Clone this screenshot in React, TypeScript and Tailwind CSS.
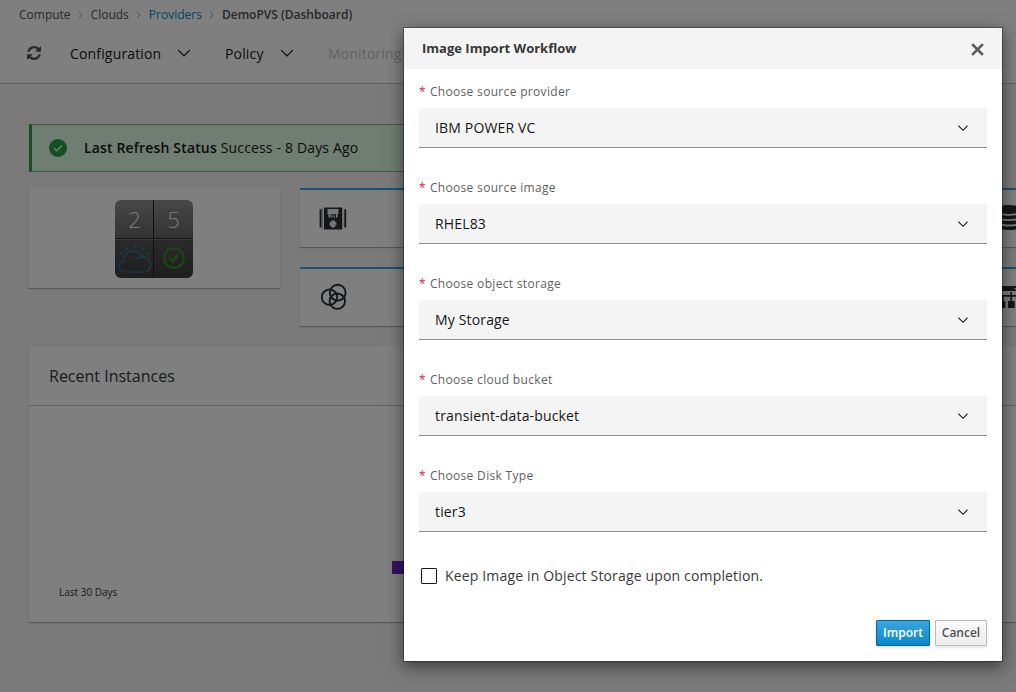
import React from "react";

const fields = [
  { label: "Choose source provider", value: "IBM POWER VC" },
  { label: "Choose source image", value: "RHEL83" },
  { label: "Choose object storage", value: "My Storage" },
  { label: "Choose cloud bucket", value: "transient-data-bucket" },
  { label: "Choose Disk Type", value: "tier3" },
];

function Chevron({ size = 16 }: { size?: number }) {
  return (
    <svg width={size} height={size} viewBox="0 0 16 16" fill="currentColor" className="shrink-0">
      <path d="M8 11L3 6l.7-.7L8 9.6l4.3-4.3.7.7z" />
    </svg>
  );
}

function Crumb() {
  return (
    <svg width="5" height="8" viewBox="0 0 5 8" fill="none" stroke="#9c9c9c" strokeWidth="1" className="mx-[7.5px] shrink-0">
      <path d="M1 1l3 3-3 3" />
    </svg>
  );
}

function RefreshIcon() {
  return (
    <svg width="14" height="14" viewBox="0 0 1536 1536" fill="#4d5258">
      <path d="M1511 928q0 5-1 7-64 268-268 434.500T764 1536q-146 0-282.500-55T238 1324l-129 129q-19 19-45 19t-45-19-19-45V960q0-26 19-45t45-19h448q26 0 45 19t19 45-19 45l-137 137q71 66 161 102t187 36q134 0 250-65t186-179q11-17 53-117 8-23 30-23h192q13 0 22.500 9.500t9.500 22.500zm25-800v448q0 26-19 45t-45 19h-448q-26 0-45-19t-19-45 19-45l138-138Q969 256 768 256q-134 0-250 65T332 500q-11 17-53 117-8 23-30 23H50q-13 0-22.500-9.500T18 608v-7q65-268 270-434.500T768 0q146 0 284 55.500T1297 212l130-129q19-19 45-19t45 19 19 45z" />
    </svg>
  );
}

function VmIcon() {
  return (
    <svg width="28" height="24" viewBox="0 0 28 24" fill="#292e34" className="mt-px">
      <path d="M.6 2.200h1.900v18.300H.6zM25.300 2.200h1.900v18.300h-1.900z" />
      <path d="M3 1h1v21H3z" opacity=".35" />
      <path d="M23.400 1h.8v21h-.8z" opacity=".35" />
      <path d="M5 .5h18v22H5z" />
      <path d="M8.500 2h11v5.300h-11zM9.500 7.300h2v3.200h-2zM12.200 8.300h1.400v2.200h-1.400zM14.600 8.300H16v2.200h-1.400zM17 7.300h1.600v3.200H17z" fill="#ededed" />
      <path d="M12.800 13.500l2.400 7M15.400 13.500l-2.600 7M10.700 15.600l6.600 2.800M17.300 15.600l-6.600 2.800" stroke="#ededed" strokeWidth="1.700" />
    </svg>
  );
}

function RingsIcon() {
  return (
    <svg width="28" height="28" viewBox="0 0 28 28" fill="none" stroke="#292e34" strokeWidth="1.900">
      <circle cx="9.500" cy="14.200" r="7.700" />
      <circle cx="17.700" cy="9.700" r="7.900" />
      <circle cx="17.300" cy="18.200" r="7.700" />
    </svg>
  );
}

function DatabaseIcon() {
  return (
    <svg width="26" height="28" viewBox="0 0 26 28" fill="#292e34">
      <ellipse cx="13" cy="5.500" rx="12.500" ry="4.500" />
      <path d="M.5 9.200c3 3.300 22 3.300 25 0v3c-3 4-22 4-25 0zM.5 14.600c3 3.300 22 3.300 25 0v3c-3 4-22 4-25 0zM.5 20c3 3.300 22 3.300 25 0v3c-3 4-22 4-25 0z" />
    </svg>
  );
}

function NetworkIcon() {
  return (
    <svg width="28" height="24" viewBox="0 0 28 24" fill="#292e34">
      <path d="M1 1h26v5H1zM3 10h22v1.700H3zM17.300 7H19v10h-1.700zM9 10h1.700v7H9zM6 16h6.300v7H6zM15 16h6.700v7H15z" />
      <path d="M21.500 3H23v1.200h-1.500z" fill="#fff" />
    </svg>
  );
}

function WeatherIcon() {
  return (
    <svg width="34" height="32" viewBox="0 0 34 32" fill="none" strokeWidth="1.200" className="ml-px">
      <defs>
        <linearGradient id="sky" x1="0" y1="1" x2="1" y2="0">
          <stop offset="0" stopColor="#2f64b5" />
          <stop offset="1" stopColor="#3599a8" />
        </linearGradient>
      </defs>
      <g stroke="url(#sky)">
        <path d="M7.500 29c-4 0-6.500-2.600-6.500-6 0-3.200 2-5.300 5-5.700-.2-6 4.500-9.300 9.800-9.300 4.500 0 7.800 2.500 9.200 6 4.500-.3 7.500 3.300 7.500 7.500 0 4.500-2.800 7.500-6 7.500z" />
        <path d="M6 17v3M25 14c-2.500 0-4.500.6-6 2" />
      </g>
      <path d="M17 1.500v4M7.800 3.800l2 3.500M26 3.800l-2 3.500M1.500 9.500l3.500 2.400M32.500 9.500l-3.500 2.400" stroke="#328ea5" />
    </svg>
  );
}

const card = "bg-white shadow-[0_1px_1px_rgba(3,3,3,0.3)]";

function MiniCard({ children, className }: { children: React.ReactNode; className: string }) {
  return <div className={`${card} flex h-[59px] items-center border-t-2 border-[#39a5dc] pb-px ${className}`}>{children}</div>;
}

function Dashboard() {
  return (
    <div className="h-[692px] w-[1016px] overflow-hidden bg-[#f5f5f5]">
      <header className="h-[84px] border-b border-[#c6c6c6] bg-white">
        <nav className="flex h-[29px] items-center pl-[19px] text-[12px] text-[#4d5258]">
          <span>Compute</span>
          <Crumb />
          <span>Clouds</span>
          <Crumb />
          <span className="text-[#0088ce]">Providers</span>
          <Crumb />
          <span className="font-semibold">DemoPVS (Dashboard)</span>
        </nav>
        <div className="flex h-[48px] items-center pl-[27px] text-[14px] tracking-[0.16px] text-[#161616]">
          <RefreshIcon />
          <span className="ml-[29px] w-[104px]">Configuration</span>
          <Chevron size={20} />
          <span className="ml-[31px] w-[52px]">Policy</span>
          <Chevron size={20} />
          <span className="ml-[31px] text-[#c6c6c6]">Monitoring</span>
        </div>
      </header>
      <main className="ml-[29px] mt-10 w-[1100px]">
        <div className="flex h-12 w-[900px] items-center border border-l-[3px] border-[#6fc186] border-l-[#24a148] bg-[#defbe6] pl-[17px] text-[14px] tracking-[0.16px] text-[#161616]">
          <svg width="18" height="18" viewBox="0 0 18 18">
            <circle cx="9" cy="9" r="9" fill="#24a148" />
            <path d="M5 9l2.700 2.700L13 6.500" fill="none" stroke="#defbe6" strokeWidth="1.400" />
          </svg>
          <p className="ml-[17px] pb-0.5">
            <span className="font-semibold">Last Refresh Status</span> Success - 8 Days Ago
          </p>
        </div>
        <div className="mt-4 flex">
          <div className={`${card} flex h-[100px] w-[251px] pl-[86px] pt-3`}>
            <div className="grid h-[78px] w-[78px] grid-cols-2 grid-rows-2 overflow-hidden rounded-[6px] bg-[linear-gradient(#909090,#646464_50%,#484848)] text-[22px] font-light text-[#f0f0f0]">
              <div className="flex items-center justify-center border-b border-r border-[#202020] pl-px">2</div>
              <div className="flex items-center justify-center border-b border-[#202020]">5</div>
              <div className="flex items-center justify-center border-r border-t border-r-[#202020] border-t-[#777777] bg-black/15">
                <WeatherIcon />
              </div>
              <div className="flex items-center justify-center border-t border-[#777777] bg-black/15 pb-0.5">
                <svg width="22" height="22" viewBox="0 0 22 22" fill="none" stroke="#2f8f22">
                  <circle cx="11" cy="11" r="9.800" strokeWidth="2.200" />
                  <path d="M6.300 11l3.200 3.200 6-6" strokeWidth="2.800" />
                </svg>
              </div>
            </div>
          </div>
          <div className="ml-5 flex flex-col gap-5">
            <MiniCard className="w-[320px] pl-[19px]"><VmIcon /></MiniCard>
            <MiniCard className="w-[320px] pl-5"><RingsIcon /></MiniCard>
          </div>
          <div className="ml-5 flex flex-col gap-5">
            <MiniCard className="w-[480px] pl-[356px]"><DatabaseIcon /></MiniCard>
            <MiniCard className="w-[480px] pl-[353px]"><NetworkIcon /></MiniCard>
          </div>
        </div>
        <section className={`${card} mt-5 h-[276px]`}>
          <h2 className="flex h-[60px] items-center border-b border-[#c6c6c6] pl-5 text-[16px] text-[#363636]">Recent Instances</h2>
          <div className="flex flex-col pt-[155px]">
            <div className="ml-[363px] h-[13px] w-[100px] bg-[#6929c4]" />
            <span className="ml-[30px] mt-[10px] text-[10px] leading-4 text-[#363636]">Last 30 Days</span>
          </div>
        </section>
      </main>
    </div>
  );
}

function ImportDialog() {
  return (
    <div role="dialog" className="flex h-[635px] w-[600px] flex-col border border-black/30 bg-white bg-clip-padding shadow-[0_5px_15px_rgba(0,0,0,0.5)]">
      <div className="flex h-[41px] items-center justify-between bg-[#f4f4f4] pl-[18px] pr-[18px]">
        <h1 className="text-[13px] font-bold text-[#363636]">Image Import Workflow</h1>
        <button aria-label="Close" className="mt-px">
          <svg width="13" height="13" viewBox="0 0 13 13" fill="none" stroke="#5c5c5c" strokeWidth="2.600" strokeLinecap="square">
            <path d="M2 2l9 9M11 2l-9 9" />
          </svg>
        </button>
      </div>
      <form className="px-[15px] pt-[15px]">
        {fields.map((field) => (
          <div key={field.label} className="mb-8">
            <label className="mb-2 block h-4 text-[12px] leading-4 tracking-[0.32px] text-[#5f5f5f]">
              <span className="mr-1 text-[#ee1127]">*</span>
              {field.label}
            </label>
            <div className="flex h-10 items-center justify-between border-b border-[#8d8d8d] bg-[#f4f4f4] px-4 text-[14px] tracking-[0.16px] text-[#161616]">
              {field.value}
              <Chevron />
            </div>
          </div>
        ))}
        <label className="mt-[36px] flex h-4 items-center pl-[2px] text-[14px] tracking-[0.16px] text-[#393939]">
          <span className="mr-2 h-4 w-4 rounded-[1px] border border-[#161616]" />
          <span className="pb-0.5">Keep Image in Object Storage upon completion.</span>
        </label>
      </form>
      <div className="mt-9 flex justify-end gap-[5px] pr-[15px] text-[12px] font-semibold">
        <button className="h-[26px] w-[54px] rounded-[1px] border border-[#00659c] bg-gradient-to-b from-[#39a5dc] to-[#0088ce] text-white shadow-[0_2px_3px_rgba(3,3,3,0.1)]">Import</button>
        <button className="h-[26px] w-[52px] rounded-[1px] border border-[#bbb] bg-gradient-to-b from-[#fafafa] to-[#ededed] text-[#4d5258] shadow-[0_2px_3px_rgba(3,3,3,0.1)]">Cancel</button>
      </div>
    </div>
  );
}

export default function App() {
  return (
    <div className="relative h-[692px] w-[1016px] overflow-hidden font-['Open_Sans',sans-serif]">
      <Dashboard />
      <div className="absolute inset-0 flex items-start justify-end bg-black/50 pr-[13px] pt-[27px]">
        <ImportDialog />
      </div>
    </div>
  );
}
